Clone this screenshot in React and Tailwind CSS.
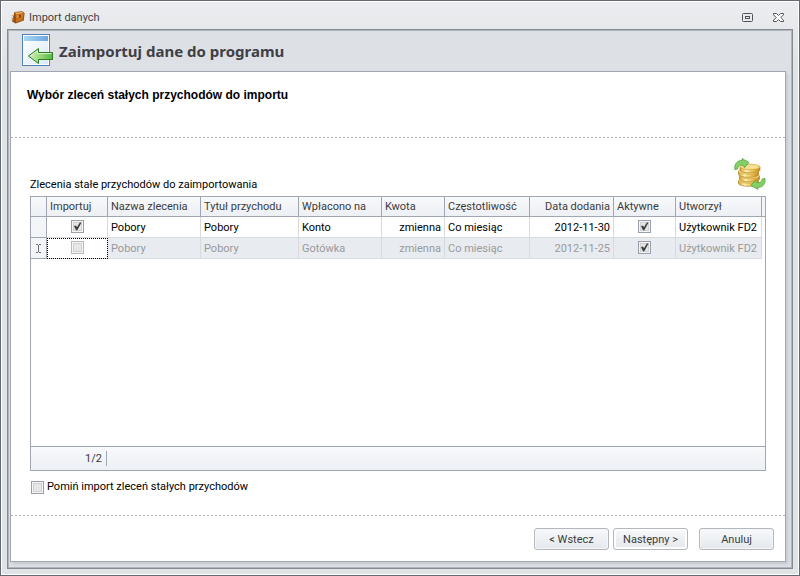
import React, { useState } from 'react';

const COLUMNS = [
  { key: 'name', label: 'Nazwa zlecenia', width: 'w-[93px]', align: 'text-left' },
  { key: 'title', label: 'Tytuł przychodu', width: 'w-[98px]', align: 'text-left' },
  { key: 'account', label: 'Wpłacono na', width: 'w-[83px]', align: 'text-left' },
  { key: 'amount', label: 'Kwota', width: 'w-[63px]', align: 'text-right', headAlign: 'text-left' },
  { key: 'frequency', label: 'Częstotliwość', width: 'w-[85px]', align: 'text-left' },
  { key: 'date', label: 'Data dodania', width: 'w-[84px]', align: 'text-right' },
];

const ORDERS = [
  { id: 1, name: 'Pobory', title: 'Pobory', account: 'Konto', amount: 'zmienna', frequency: 'Co miesiąc', date: '2012-11-30', user: 'Użytkownik FD2', imported: true, active: true },
  { id: 2, name: 'Pobory', title: 'Pobory', account: 'Gotówka', amount: 'zmienna', frequency: 'Co miesiąc', date: '2012-11-25', user: 'Użytkownik FD2', imported: false, active: true },
];

const CheckBox = ({ muted, ...props }) => (
  <span className="inline-grid size-[13px] shrink-0 align-top">
    <input
      type="checkbox"
      className={`peer col-start-1 row-start-1 m-0 size-[13px] appearance-none border bg-[#e6e6e6] shadow-[inset_0_0_0_1px_#f4f4f4,inset_0_0_0_2px_#cfd1d4] ${muted ? 'border-[#b4b8c0]' : 'border-[#9aa0ab]'}`}
      {...props}
    />
    <svg viewBox="0 0 13 13" className="pointer-events-none invisible col-start-1 row-start-1 size-[13px] peer-checked:visible">
      <path d="M3 6 L5 5.4 L6 7.2 L8.8 2.4 L10.5 2.4 L6.3 10.2 L5 10.2 Z" fill="#3c3c3c" />
    </svg>
  </span>
);

const AppIcon = () => (
  <svg viewBox="0 0 14 13" className="h-[13px] w-[14px]">
    <path d="M3.5 1 L11 0.3 L13.6 2 L12.8 9.6 L4.6 12.6 L0.8 10.2 Z" fill="#8a4a12" />
    <path d="M4.6 3 L12.8 1.8 L12 9 L4.8 11.6 Z" fill="#c9701d" />
    <path d="M4 1.6 L10.8 0.9 L12.6 1.9 L4.8 3.2 Z" fill="#eeb25c" />
    <path d="M5.4 4.4 L11.4 3.4 L11 5.6 L5.6 6.8 Z" fill="#dd8f34" />
    <path d="M8.2 4 L9.8 3.8 L9.6 6.4 L8.4 6.6 Z" fill="#4e2405" />
    <path d="M0.5 4.5h2.6M0.3 6.8h2.6M0.3 9h2.6" stroke="#d9ad7c" strokeWidth="0.9" />
  </svg>
);

const ImportIcon = () => (
  <svg viewBox="0 0 32 33" className="h-[33px] w-[32px]">
    <defs>
      <linearGradient id="sheet" x1="0" y1="0" x2="1" y2="1">
        <stop offset="0" stopColor="#ffffff" />
        <stop offset="1" stopColor="#d9eafb" />
      </linearGradient>
      <linearGradient id="sheetBar" x1="0" y1="0" x2="1" y2="0">
        <stop offset="0" stopColor="#a9d8f3" />
        <stop offset="1" stopColor="#6fa6e3" />
      </linearGradient>
      <linearGradient id="arrow" x1="0" y1="0" x2="1" y2="0">
        <stop offset="0" stopColor="#d3f3b8" />
        <stop offset="1" stopColor="#57b843" />
      </linearGradient>
    </defs>
    <rect x="0.5" y="0.5" width="27" height="31" fill="#fff" stroke="#4f80b8" />
    <rect x="2" y="2" width="24" height="28" fill="url(#sheet)" />
    <rect x="2" y="2" width="24" height="5" fill="url(#sheetBar)" />
    <path d="M6.5 22 L16.5 14.5 V18.5 H30.5 V25.5 H16.5 V29.5 Z" fill="url(#arrow)" stroke="#2c7d1b" strokeLinejoin="round" />
    <path d="M8.5 22 L15.5 16.8 V19.6 H29.5" fill="none" stroke="#e4f8d4" strokeWidth="0.9" />
  </svg>
);

const CoinsIcon = () => (
  <svg viewBox="0 0 32 32" className="mb-[2px] size-8">
    <defs>
      <linearGradient id="coin" x1="0" y1="0" x2="1" y2="0">
        <stop offset="0" stopColor="#d9a02c" />
        <stop offset="0.3" stopColor="#fff3b8" />
        <stop offset="0.65" stopColor="#ecc04c" />
        <stop offset="1" stopColor="#c28a22" />
      </linearGradient>
    </defs>
    {[[14.5, 24], [15.5, 19.5], [14.5, 15], [16, 10.5]].map(([x, y]) => (
      <g key={y}>
        <path d={`M${x - 10} ${y - 1.5} v3 a10 2.8 0 0 0 20 0 v-3 Z`} fill="url(#coin)" stroke="#b5822a" strokeWidth="0.7" />
        <ellipse cx={x} cy={y - 1.5} rx="10" ry="2.8" fill="#f6d878" stroke="#c99a38" strokeWidth="0.6" />
      </g>
    ))}
    <ellipse cx="16" cy="8.8" rx="7.4" ry="1.7" fill="#f9e294" />
    <path d="M0.8 11.5 C0 5.5 4 2 8.5 2.4 L8 0.6 L15 4.4 L10.4 9.8 L9.6 7.4 C6 6.4 4 8 3.6 11 Z" fill="#86cf68" stroke="#55a53e" strokeWidth="0.8" strokeLinejoin="round" />
    <path d="M31 20.5 C31.8 26.5 28 29.6 23.5 29.4 L24 31.4 L17 27.4 L21.6 22 L22.4 24.4 C26 25.4 27.6 24 28.2 21 Z" fill="#86cf68" stroke="#55a53e" strokeWidth="0.8" strokeLinejoin="round" />
  </svg>
);

const Divider = () => (
  <div className="h-px shrink-0 bg-[repeating-linear-gradient(90deg,#b0b0b0_0_2px,transparent_2px_4px)]" />
);

const WizardButton = ({ children, focused }) => (
  <button
    type="button"
    className={`h-[22px] w-[75px] rounded-[3px] border border-[#b3b7be] bg-linear-to-b from-[#f7f9fb] to-[#e4e8ec] pt-px text-[#3b3b3b] ${focused ? 'shadow-[inset_0_0_0_2px_#fdfdfe]' : 'shadow-[inset_0_0_0_1px_#f4f6f8]'}`}
  >
    {children}
  </button>
);

const headCell = 'h-5 truncate border-r border-b border-[#a0a6b2] bg-linear-to-b from-[#f7f9fb] to-[#edf0f4] px-[3px] py-0 font-normal text-[#3b3b3b]';

const App = () => {
  const [orders, setOrders] = useState(ORDERS);
  const [skip, setSkip] = useState(false);

  const toggle = (id, field) => {
    setOrders(orders.map((o) => (o.id === id ? { ...o, [field]: !o[field] } : o)));
  };

  const selected = orders.filter((o) => o.imported).length;

  return (
    <div className="flex min-h-screen flex-col border border-[#646a74] bg-[#e1e4e7] bg-linear-to-b from-[#ecedf0] to-[#e0e4e6] to-[60px] px-[6px] pb-[6px] font-[Roboto,sans-serif] text-[11px] leading-[14px] text-black shadow-[inset_0_0_0_1px_#ffffff]">
      {/* Barra tytułowa okna */}
      <header className="flex h-7 items-center pt-[5px] pr-[9px] pl-1">
        <AppIcon />
        <h1 className="ml-1 flex-1 pt-px text-[#3f3f46]">Import danych</h1>
        <button type="button" aria-label="Maksymalizuj" className="mr-5">
          <svg viewBox="0 0 11 9" className="h-[9px] w-[11px]" fill="none" stroke="#4f535b">
            <rect x="0.5" y="0.5" width="10" height="8" rx="1" />
            <rect x="3.5" y="3.5" width="4" height="2" />
          </svg>
        </button>
        <button type="button" aria-label="Zamknij">
          <svg viewBox="0 0 11 9" className="h-[9px] w-[11px]" fill="#fff" stroke="#4f535b" strokeLinejoin="round">
            <path d="M0.5 0.5 H3.5 L5.5 2.5 L7.5 0.5 H10.5 V1.8 L7.8 4.5 L10.5 7.2 V8.5 H7.5 L5.5 6.5 L3.5 8.5 H0.5 V7.2 L3.2 4.5 L0.5 1.8 Z" />
          </svg>
        </button>
      </header>

      <div className="flex flex-1 flex-col border border-[#868b92] bg-[#dde0e5] pt-px pr-[6px] pb-[6px] pl-[2px] shadow-[inset_0_0_0_1px_#b0b5bc]">
        <div className="flex h-10 items-center gap-[5px] pb-px pl-3">
          <ImportIcon />
          <h2 className="font-['Noto_Sans',sans-serif] text-[15px] leading-5 font-bold text-[#3f3f46]">Zaimportuj dane do programu</h2>
        </div>

        <main className="flex flex-1 flex-col border border-[#a0a6b2] bg-white shadow-[2px_2px_3px_#c3c8d1]">
          <h3 className="h-[65px] px-4 pt-4 font-['Liberation_Sans',sans-serif] text-[12px] font-bold">
            Wybór zleceń stałych przychodów do importu
          </h3>
          <Divider />

          <section className="flex flex-1 flex-col pt-5 pr-[19px] pb-[21px] pl-[19px]">
            <div className="flex items-end justify-between pb-1">
              <p>Zlecenia stałe przychodów do zaimportowania</p>
              <CoinsIcon />
            </div>

            <div className="flex flex-1 flex-col border border-[#a0a6b2]">
              <div className="flex-1">
                <table className="w-full table-fixed border-separate border-spacing-0">
                  <colgroup>
                    <col className="w-4" />
                    <col className="w-[61px]" />
                    {COLUMNS.map((c) => <col key={c.key} className={c.width} />)}
                    <col className="w-[62px]" />
                    <col />
                    <col className="w-[3px]" />
                  </colgroup>
                  <thead>
                    <tr>
                      <th className={headCell}></th>
                      <th className={`${headCell} text-left`}>Importuj</th>
                      {COLUMNS.map((c) => (
                        <th key={c.key} className={`${headCell} ${c.headAlign || c.align}`}>{c.label}</th>
                      ))}
                      <th className={`${headCell} text-left`}>Aktywne</th>
                      <th className={`${headCell} text-left`}>Utworzył</th>
                      <th className="border-b border-[#a0a6b2] bg-[#f2f4f7] p-0"></th>
                    </tr>
                  </thead>
                  <tbody>
                    {orders.map((o) => {
                      const tone = o.imported ? '' : 'bg-[#e8ebf0] text-[#9a9a9a]';
                      const cell = `h-[21px] truncate border-r border-b border-[#d8dade] px-[3px] pb-0 ${tone}`;
                      return (
                        <tr key={o.id}>
                          <td className="h-[21px] border-r border-b border-[#a0a6b2] bg-[#f3f5f8] p-0">
                            {!o.imported && (
                              <svg viewBox="0 0 7 9" className="mx-auto h-[9px] w-[7px]" fill="none" stroke="#6b6f76">
                                <path d="M1 0.5h2M4 0.5h2M1 8.5h2M4 8.5h2M3.5 1v7" />
                              </svg>
                            )}
                          </td>
                          <td className={`h-[21px] border-r border-b border-[#d8dade] p-0 text-center ${o.imported ? '' : 'outline-1 -outline-offset-1 outline-black outline-dotted'}`}>
                            <CheckBox aria-label="Importuj" muted={!o.imported} checked={o.imported} onChange={() => toggle(o.id, 'imported')} />
                          </td>
                          {COLUMNS.map((c) => (
                            <td key={c.key} className={`${cell} pt-[2px] ${c.align}`}>{o[c.key]}</td>
                          ))}
                          <td className={`${cell} pt-0 text-center`}>
                            <CheckBox aria-label="Aktywne" checked={o.active} onChange={() => toggle(o.id, 'active')} />
                          </td>
                          <td className={`${cell} pt-[2px]`}>{o.user}</td>
                          <td className="p-0"></td>
                        </tr>
                      );
                    })}
                  </tbody>
                </table>
              </div>
              <div className="flex h-6 items-center border-t border-[#a0a6b2] bg-linear-to-b from-[#f7f9fb] to-[#edf0f4] text-[#3b3b3b]">
                <span className="w-[76px] border-r border-[#a0a6b2] pt-px pr-1 text-right">
                  {selected}/{orders.length}
                </span>
              </div>
            </div>

            <label className="flex items-center gap-[3px] pt-[9px] pl-px">
              <CheckBox checked={skip} onChange={() => setSkip(!skip)} />
              Pomiń import zleceń stałych przychodów
            </label>
          </section>

          <Divider />
          <footer className="flex justify-end gap-1 px-[11px] pt-3 pb-[11px]">
            <WizardButton>&lt; Wstecz</WizardButton>
            <WizardButton focused>Następny &gt;</WizardButton>
            <div className="pl-[7px]">
              <WizardButton>Anuluj</WizardButton>
            </div>
          </footer>
        </main>
      </div>
    </div>
  );
};

export default App;
